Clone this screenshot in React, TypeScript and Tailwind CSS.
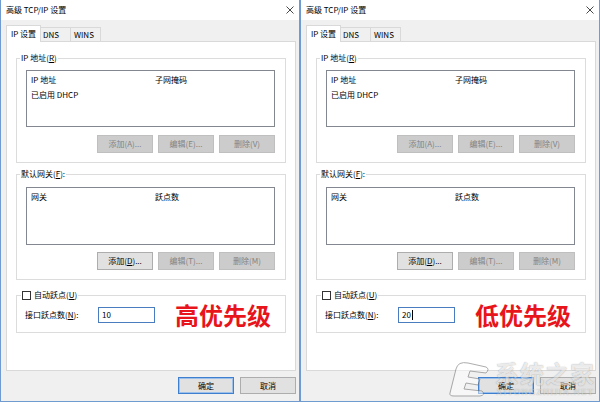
import React from "react";

const font = "font-['Noto_Sans_CJK_SC','Noto_Sans',sans-serif]";

function Key({ k }: { k: string }) {
  return <span className="underline underline-offset-1">{k}</span>;
}

function Btn({
  children,
  disabled,
  primary,
}: {
  children: React.ReactNode;
  disabled?: boolean;
  primary?: boolean;
}) {
  const cls = disabled
    ? "bg-[#cccccc] border-[#bfbfbf] text-[#838383]"
    : primary
    ? "bg-[#e1e1e1] border-[#3f7fcf] text-black shadow-[inset_0_0_0_1px_#9cc0ea]"
    : "bg-[#e1e1e1] border-[#adadad] text-black";
  return (
    <div className={`flex h-full w-[56px] items-center justify-center border text-[8px] leading-none ${cls}`}>
      {children}
    </div>
  );
}

function ListBox({ cols, rows, h }: { cols: [string, string]; rows: string[]; h: string }) {
  return (
    <div className={`ml-[9px] w-[249px] border border-[#828790] bg-white pt-[1px] text-[8px] leading-[15px] ${h}`}>
      <div className="flex">
        <div className="w-[128px] pl-[4px]">{cols[0]}</div>
        <div>{cols[1]}</div>
      </div>
      {rows.map((r) => (
        <div key={r} className="pl-[4px]">
          {r}
        </div>
      ))}
    </div>
  );
}

function Dialog({
  metric,
  priority,
  cursor,
  watermark,
}: {
  metric: string;
  priority: string;
  cursor?: boolean;
  watermark?: boolean;
}) {
  return (
    <div className={`relative flex h-[402px] w-[300px] flex-col border-x border-b border-[#6f9bd1] bg-[#f0f0f0] text-black ${font}`}>
      {/* title bar */}
      <div className="flex h-[20px] items-center justify-between bg-white pl-[5px] pr-[5px]">
        <span className="text-[8px] leading-none">高级 TCP/IP 设置</span>
        <svg width="8" height="8" viewBox="0 0 8 8" className="text-[#333]">
          <path d="M0.5 0.5L7.5 7.5M7.5 0.5L0.5 7.5" stroke="currentColor" strokeWidth="0.9" />
        </svg>
      </div>

      <div className="pl-[5px]">
        {/* tabs */}
        <div className="relative z-10 -mb-px mt-[5px] flex h-[17px] items-end text-[8px] leading-none">
          <div className="flex h-[17px] w-[35px] items-center justify-center border border-b-0 border-[#d9d9d9] bg-white pb-[1px]">
            IP 设置
          </div>
          <div className="flex h-[15px] w-[30px] items-center border border-l-0 border-[#d9d9d9] bg-[#f0f0f0] pl-[2px]">
            DNS
          </div>
          <div className="flex h-[15px] w-[30px] items-center border border-l-0 border-[#d9d9d9] bg-[#f0f0f0] pl-[3px]">
            WINS
          </div>
        </div>

        {/* tab page */}
        <div className="flex h-[330px] w-[290px] flex-col border border-[#d9d9d9] bg-white">
          <fieldset className="ml-[9px] mt-[11px] w-[270px] border border-[#dcdcdc] pb-[9px]">
            <legend className="ml-[3px] px-[1px] text-[8px] leading-[10px]">
              IP 地址(<Key k="R" />)
            </legend>
            <div className="mt-[7px]">
              <ListBox cols={["IP 地址", "子网掩码"]} rows={["已启用 DHCP"]} h="h-[57px]" />
            </div>
            <div className="ml-[9px] mt-[8px] flex h-[18px] w-[249px] justify-end gap-[5px]">
              <Btn disabled>添加(A)...</Btn>
              <Btn disabled>编辑(E)...</Btn>
              <Btn disabled>删除(V)</Btn>
            </div>
          </fieldset>

          <fieldset className="ml-[9px] mt-[6px] w-[270px] border border-[#dcdcdc] pb-[9px]">
            <legend className="ml-[3px] px-[1px] text-[8px] leading-[10px]">
              默认网关(<Key k="F" />):
            </legend>
            <div className="mt-[8px]">
              <ListBox cols={["网关", "跃点数"]} rows={[]} h="h-[58px]" />
            </div>
            <div className="ml-[9px] mt-[7px] flex h-[18px] w-[249px] justify-end gap-[5px]">
              <Btn>
                添加(<Key k="D" />)...
              </Btn>
              <Btn disabled>编辑(T)...</Btn>
              <Btn disabled>删除(M)</Btn>
            </div>
          </fieldset>

          <fieldset className="ml-[9px] mt-[10px] w-[270px] border border-[#dcdcdc] pb-[9px]">
            <legend className="ml-[4px] px-[1px] text-[8px] leading-[10px]">
              <span className="flex items-center gap-[3px]">
                <span className="h-[9px] w-[9px] border border-[#333] bg-white" />
                <span>
                  自动跃点(<Key k="U" />)
                </span>
              </span>
            </legend>
            <div className="mt-[7px] flex h-[16px] items-center">
              <div className="w-[81px] pl-[8px] text-[8px] leading-none">
                接口跃点数(<Key k="N" />):
              </div>
              <div className="flex h-[16px] w-[57px] items-center border border-[#4a7cc0] bg-white pl-[3px] text-[8px] leading-none">
                {metric}
                {cursor && <span className="ml-[1px] h-[10px] w-px bg-black" />}
              </div>
              <div className="ml-[20px] text-[24px] font-bold leading-[16px] text-[#e8141b]">{priority}</div>
            </div>
          </fieldset>
        </div>

        {/* dialog buttons */}
        <div className="mt-[6px] flex h-[17px] w-[290px] justify-end gap-[6px]">
          <Btn primary>确定</Btn>
          <Btn>取消</Btn>
        </div>
      </div>

      {/* site watermark lying over the corner */}
      {watermark && (
        <div className="pointer-events-none absolute bottom-[4px] right-[4px] flex items-end gap-[3px] opacity-60">
          <svg width="46" height="40" viewBox="0 0 46 40">
            <path
              d="M4 36 L10 12 Q12 4 22 6 L40 10 Q44 12 40 16 L24 14 L22 20 L34 22 L32 28 L20 26 L18 32 L36 34 Q40 38 34 39 L8 39 Q3 39 4 36Z"
              fill="white"
              fillOpacity="0.8"
              stroke="#777"
              strokeWidth="1"
            />
          </svg>
          <div className="flex flex-col items-center">
            <span className="text-[24px] font-bold leading-[28px] tracking-[1px] text-white/80 [text-shadow:0_0_1px_#555]">
              系统之家
            </span>
            <span className="font-['Liberation_Serif',serif] text-[9px] leading-[10px] tracking-[1px] text-white/80 [text-shadow:0_0_1px_#555]">
              XITONGZHIJIA.NET
            </span>
          </div>
        </div>
      )}
    </div>
  );
}

export default function App() {
  return (
    <div className="flex h-[403px] w-[600px] bg-white">
      <Dialog metric="10" priority="高优先级" />
      <Dialog metric="20" priority="低优先级" cursor watermark />
    </div>
  );
}
